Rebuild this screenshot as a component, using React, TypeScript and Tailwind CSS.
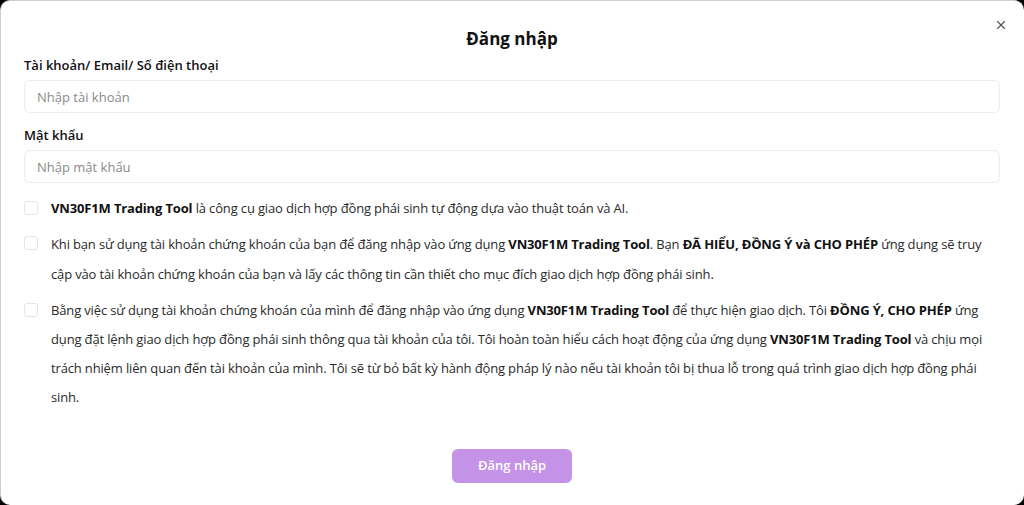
import { X } from "lucide-react";

const Check = () => (
  <span className="mt-[7px] h-[14px] w-[14px] shrink-0 rounded-[3px] border border-[#e5e5e5] bg-white" />
);

const B = ({ children }: { children: React.ReactNode }) => (
  <b className="font-bold text-[#111]">{children}</b>
);

const App = () => {
  return (
    <div className="h-[505px] w-[1024px] bg-black" style={{ fontFamily: '"Open Sans", "Noto Sans", sans-serif' }}>
      <div className="relative flex h-full flex-col rounded-[10px] border-t border-l border-[#cfcfcf] bg-white pl-[23px] pr-6 pt-[26px] text-[#2a2a2a]">
        <button className="absolute right-[16px] top-[17px] text-[#555]">
          <X size={14} strokeWidth={2} />
        </button>
        <h1 className="text-center text-[17px] font-bold leading-6 text-[#111]">Đăng nhập</h1>

        <label className="mt-[4px] text-[13px] font-semibold leading-5 text-[#111]">
          Tài khoản/ Email/ Số điện thoại
        </label>
        <input
          className="mt-[5px] h-[33px] w-full rounded-md border border-[#ececec] px-3 text-[13px] placeholder:text-[#8a8a8a] outline-none"
          placeholder="Nhập tài khoản"
        />

        <label className="mt-[12px] text-[13px] font-semibold leading-5 text-[#111]">Mật khẩu</label>
        <input
          className="mt-[5px] h-[33px] w-full rounded-md border border-[#ececec] px-3 text-[13px] placeholder:text-[#8a8a8a] outline-none"
          placeholder="Nhập mật khẩu"
        />

        <div className="flex flex-col text-[13px] leading-[29px] tracking-[-0.15px]">
          <div className="mt-[11px] flex gap-[13px]">
            <Check />
            <p>
              <B>VN30F1M Trading Tool</B> là công cụ giao dịch hợp đồng phái sinh tự động dựa vào thuật toán và AI.
            </p>
          </div>

          <div className="mt-[6px] flex gap-[13px]">
            <Check />
            <p className="leading-[30px]">
              Khi bạn sử dụng tài khoản chứng khoán của bạn để đăng nhập vào ứng dụng <B>VN30F1M Trading Tool</B>. Bạn{" "}
              <B>ĐÃ HIỂU, ĐỒNG Ý và CHO PHÉP</B> ứng dụng sẽ truy
              <br />
              cập vào tài khoản chứng khoán của bạn và lấy các thông tin cần thiết cho mục đích giao dịch hợp đồng phái
              sinh.
            </p>
          </div>

          <div className="mt-[7px] flex gap-[13px]">
            <Check />
            <p>
              Bằng việc sử dụng tài khoản chứng khoán của mình để đăng nhập vào ứng dụng <B>VN30F1M Trading Tool</B> để
              thực hiện giao dịch. Tôi <B>ĐỒNG Ý, CHO PHÉP</B> ứng
              <br />
              dụng đặt lệnh giao dịch hợp đồng phái sinh thông qua tài khoản của tôi. Tôi hoàn toàn hiểu cách hoạt động
              của ứng dụng <B>VN30F1M Trading Tool</B> và chịu mọi
              <br />
              trách nhiệm liên quan đến tài khoản của mình. Tôi sẽ từ bỏ bất kỳ hành động pháp lý nào nếu tài khoản tôi bị
              thua lỗ trong quá trình giao dịch hợp đồng phái
              <br />
              sinh.
            </p>
          </div>
        </div>

        <div className="mt-[37px] flex justify-center">
          <button className="h-[34px] w-[120px] rounded-md bg-[#c493e8] text-[13px] font-semibold text-white">
            Đăng nhập
          </button>
        </div>
      </div>
    </div>
  );
};

export default App;
